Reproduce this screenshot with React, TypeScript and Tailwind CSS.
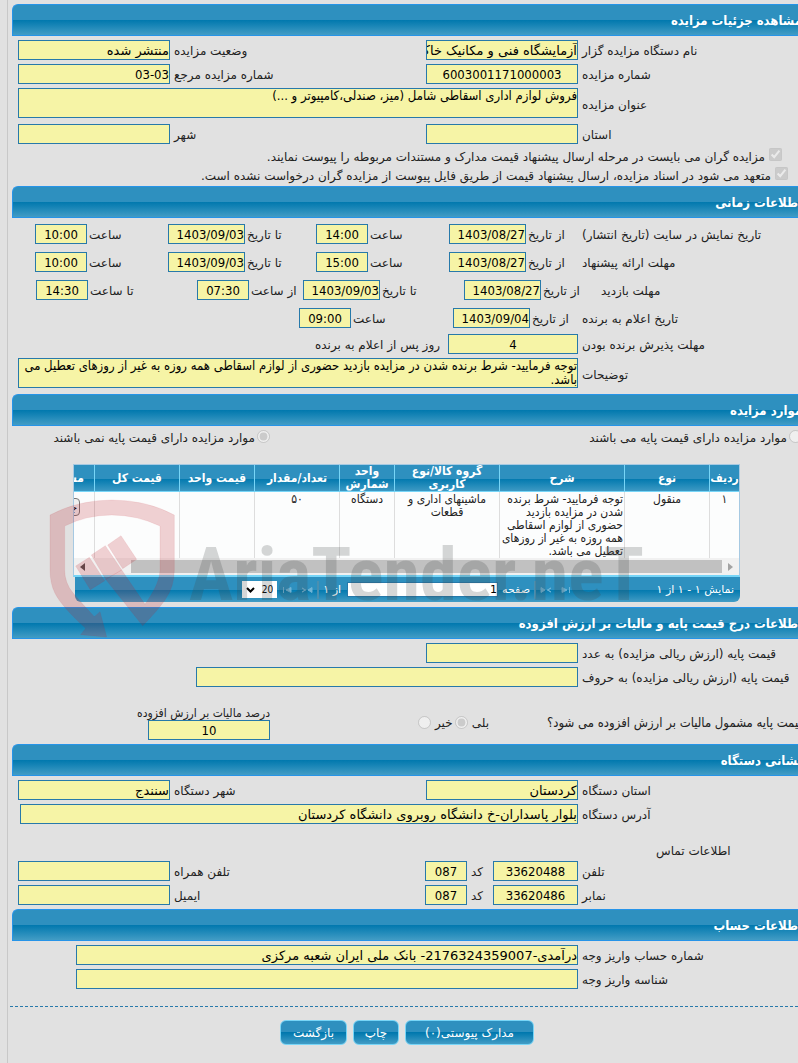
import { useId } from 'react';
import clsx from 'clsx';

const gloss = 'bg-[linear-gradient(to_bottom,#2e90bf_0%,#2e90bf_50%,#0078ae_50%,#429cc5_100%)]';
const fieldBase = 'block border border-[#2779aa] bg-[#f6f4a6] text-[13px] leading-[18px] text-black outline-none';
const condensed = "font-['DejaVu_Sans_Condensed','DejaVu_Sans',sans-serif]";

interface SectionProps {
  title: string;
  children: React.ReactNode;
}

function Section({ title, children }: SectionProps) {
  return (
    <section>
      <h2
        className={clsx(
          gloss,
          condensed,
          'flex h-8 items-center overflow-hidden rounded-tl-md border border-r-0 border-[#2694e8]'
        )}
      >
        <span className="-mr-1 whitespace-nowrap pt-0.5 text-[13px] font-bold text-white">{title}</span>
      </h2>
      {children}
    </section>
  );
}

interface FieldProps {
  label: string;
  value?: string;
  labelClass?: string;
  inputClass?: string;
}

function Field({ label, value = '', labelClass = 'w-[216px]', inputClass = 'w-[152px]' }: FieldProps) {
  const id = useId();
  const isNumber = /^[\d-]+$/.test(value);
  return (
    <>
      <label htmlFor={id} className={clsx('shrink-0 whitespace-nowrap pt-0.5 text-left', labelClass)}>
        {label}
      </label>
      <input
        id={id}
        readOnly
        value={value}
        className={clsx(fieldBase, 'h-5 shrink-0', isNumber && condensed, inputClass)}
      />
    </>
  );
}

function AreaField({ label, value }: { label: string; value: string }) {
  const id = useId();
  return (
    <div className="flex items-center gap-1">
      <label htmlFor={id} className="w-[216px] shrink-0 pt-1 text-left">
        {label}
      </label>
      <textarea
        id={id}
        readOnly
        value={value}
        className={clsx(
          condensed,
          'ml-1.5 block h-[30px] flex-1 resize-none overflow-hidden border border-[#2779aa] bg-[#f6f4a6] text-[13px] leading-[14px] text-black outline-none'
        )}
      />
    </div>
  );
}

function TimeField({ label, value, className }: { label: string; value: string; className: string }) {
  const id = useId();
  const isDate = value.includes('/');
  return (
    <div className={clsx('flex shrink-0 items-center justify-end gap-0.5', className)}>
      <label htmlFor={id} className="whitespace-nowrap pt-0.5">
        {label}
      </label>
      <input
        id={id}
        readOnly
        value={value}
        className={clsx(fieldBase, condensed, 'h-5', isDate ? 'w-[77px]' : 'w-[52px] text-center')}
      />
    </div>
  );
}

const timeRows = [
  {
    label: 'تاریخ نمایش در سایت (تاریخ انتشار)',
    labelClass: 'w-[216px]',
    items: [
      { label: 'از تاریخ', value: '1403/08/27', className: 'w-[133px]' },
      { label: 'ساعت', value: '14:00', className: 'w-[133px]' },
      { label: 'تا تاریخ', value: '1403/09/03', className: 'w-[148px]' },
      { label: 'ساعت', value: '10:00', className: 'w-[133px]' },
    ],
  },
  {
    label: 'مهلت ارائه پیشنهاد',
    labelClass: 'w-[216px]',
    items: [
      { label: 'از تاریخ', value: '1403/08/27', className: 'w-[133px]' },
      { label: 'ساعت', value: '15:00', className: 'w-[133px]' },
      { label: 'تا تاریخ', value: '1403/09/03', className: 'w-[148px]' },
      { label: 'ساعت', value: '10:00', className: 'w-[133px]' },
    ],
  },
  {
    label: 'مهلت بازدید',
    labelClass: 'w-[197px]',
    items: [
      { label: 'از تاریخ', value: '1403/08/27', className: 'w-[137px]' },
      { label: 'تا تاریخ', value: '1403/09/03', className: 'w-[161px]' },
      { label: 'از ساعت', value: '07:30', className: 'w-[106px]' },
      { label: 'تا ساعت', value: '14:30', className: 'w-[161px]' },
    ],
  },
  {
    label: 'تاریخ اعلام به برنده',
    labelClass: 'w-[216px]',
    items: [
      { label: 'از تاریخ', value: '1403/09/04', className: 'w-[129px]' },
      { label: 'ساعت', value: '09:00', className: 'w-[154px]' },
    ],
  },
];

const columns = [
  { title: 'ردیف', width: 'w-[30px]' },
  { title: 'نوع', width: 'w-[85px]' },
  { title: 'شرح', width: 'w-[125px]' },
  { title: 'گروه کالا/نوع کاربری', width: 'w-[105px]' },
  { title: 'واحد شمارش', width: 'w-[55px]' },
  { title: 'تعداد/مقدار', width: 'w-[85px]' },
  { title: 'قیمت واحد', width: 'w-[75px]' },
  { title: 'قیمت کل', width: 'w-[85px]' },
];

const cells = [
  '۱',
  'منقول',
  'توجه فرمایید- شرط برنده شدن در مزایده بازدید حضوری از لوازم اسقاطی همه روزه به غیر از روزهای تعطیل می باشد.',
  'ماشینهای اداری و قطعات',
  'دستگاه',
  '۵۰',
  '',
  '',
];

function PagerIcon({ d, label }: { d: string; label: string }) {
  return (
    <button type="button" disabled aria-label={label} className="text-[#6fb4d6]">
      <svg width="12" height="8" viewBox="0 0 12 8" fill="currentColor" stroke="currentColor">
        <path d={d} />
      </svg>
    </button>
  );
}

function ItemsTable() {
  return (
    <div className="mr-[58px] ml-[61px]">
      <div className="overflow-hidden border border-[#a6c9e2] border-b-2 border-b-[#77d5f7]">
        <table className="w-[720px] table-fixed border-separate border-spacing-0 text-[12px] leading-[13px]">
          <thead>
            <tr className={clsx(gloss, 'h-[27px] text-white')}>
              {columns.map((col) => (
                <th
                  key={col.title}
                  scope="col"
                  className={clsx(col.width, condensed, 'border-b border-l border-[#77d5f7] p-0 font-bold')}
                >
                  {col.title}
                </th>
              ))}
              <th scope="col" className={clsx(condensed, 'border-b border-[#77d5f7] p-0 pr-2.5 text-right font-bold')}>
                مستندات
              </th>
            </tr>
          </thead>
          <tbody>
            <tr className={clsx(condensed, 'h-[66px] bg-[#fcfdfd] align-top text-[#222222]')}>
              {cells.map((cell, i) => (
                <td
                  key={i}
                  className={clsx('border-l border-[#dddddd] px-px pt-px pb-0', i === 2 ? 'text-right' : 'text-center')}
                >
                  {cell}
                </td>
              ))}
              <td className="p-0 pt-1.5">
                <button
                  type="button"
                  className="mr-3.5 h-[18px] w-11 rounded-sm border border-[#767676] bg-[#efefef] pr-0.5 text-right text-[11px] text-black"
                >
                  جزئیات
                </button>
              </td>
            </tr>
          </tbody>
        </table>
        <div className="flex h-[17px] items-center justify-between bg-[#f1f1f1] px-1.5">
          <svg width="5" height="8" viewBox="0 0 5 8" fill="#a3a3a3">
            <path d="M0 0L5 4L0 8Z" />
          </svg>
          <div className="mr-1.5 ml-[46px] h-[13px] flex-1 bg-[#c1c1c1]" />
          <svg width="5" height="8" viewBox="0 0 5 8" fill="#505050">
            <path d="M5 0L0 4L5 8Z" />
          </svg>
        </div>
      </div>
      <div className={clsx(gloss, 'ml-0.5 flex h-[25px] items-center rounded-b-md text-[11px] text-white')}>
        <span className="w-[168px] shrink-0 pr-1.5">نمایش ۱ - ۱ از ۱</span>
        <PagerIcon label="صفحه اول" d="M2 1.5L7 4L2 6.5ZM9.500 1V7" />
        <span className="w-2" />
        <PagerIcon label="صفحه قبل" d="M1 1.500L5 4L1 6.500ZM11 2L7.500 4L11 6L7.500 4Z" />
        <span className="mx-1 h-[18px] w-0.5 bg-[#4a8fb0]" />
        <label className="flex items-center gap-1">
          صفحه
          <input readOnly value="1" className="h-[15px] w-[151px] border border-[#2779aa] bg-white text-[11px] text-black" />
        </label>
        <span className="mr-1.5">از ۱</span>
        <span className="mx-1 h-[18px] w-0.5 bg-[#4a8fb0]" />
        <PagerIcon label="صفحه بعد" d="M11 1.500L7 4L11 6.500ZM1 2L4.500 4L1 6L4.500 4Z" />
        <span className="w-2" />
        <PagerIcon label="صفحه آخر" d="M10 1.500L5 4L10 6.500ZM2.500 1V7" />
        <div className="relative mr-1">
          <select
            aria-label="تعداد در صفحه"
            defaultValue="20"
            className={clsx(condensed, 'block h-[17px] w-[35px] appearance-none bg-white px-1 text-[10px] text-black')}
          >
            <option>20</option>
          </select>
          <svg className="pointer-events-none absolute top-1.5 left-1" width="9" height="6" viewBox="0 0 9 6" fill="none">
            <path d="M1 1L4.500 4.500L8 1" stroke="#000" strokeWidth="2" />
          </svg>
        </div>
      </div>
    </div>
  );
}

function Watermark() {
  return (
    <div dir="ltr" aria-hidden="true" className="pointer-events-none absolute top-24 left-[33px] flex">
      <svg width="130" height="150" viewBox="0 0 390 450" className="shrink-0">
        <g fill="#be1e28" fillOpacity="0.2" stroke="#be1e28" strokeOpacity="0.08" strokeWidth="3">
          <path d="M15 75Q100 30 200 30Q305 30 388 75V240Q388 290 360 330Q335 365 293 407L182 268L230 240L300 343Q345 280 345 240V108Q275 75 200 75Q125 75 59 108V240Q59 280 85 310Q110 340 148 380L165 365L185 441L107 434L122 415Q50 350 30 310Q15 280 15 240Z" />
          <path d="M92 228L133 202L179 272L136 299Z" />
          <path d="M139 195L181 167L230 240L182 268Z" />
          <path d="M188 165L228 137L275 208L233 236Z" />
        </g>
      </svg>
      <span className="mt-10 ml-3.5 font-['Roboto_Condensed','Liberation_Sans_Narrow','Roboto',sans-serif] text-[74px] leading-[90px] font-bold whitespace-nowrap text-[#464b4b]/22">
        AriaTender.neT
      </span>
    </div>
  );
}

function ActionButton({ children, className }: { children: React.ReactNode; className: string }) {
  return (
    <button
      type="button"
      className={clsx(gloss, 'h-[25px] rounded-md border border-[#77d5f7] text-[12px] text-white', className)}
    >
      {children}
    </button>
  );
}

export default function App() {
  return (
    <div dir="rtl" className="min-h-screen overflow-hidden bg-[#e1e1e1] pl-[7px] font-['DejaVu_Sans',sans-serif]">
      <main className="min-h-screen border-l border-[#c8c8c8] pt-1 pl-1 text-[12px] leading-4 text-[#222222]">
        <Section title="مشاهده جزئیات مزایده">
          <div className="flex flex-col gap-1 py-1">
            <div className="flex items-center gap-1">
              <Field label="نام دستگاه مزایده گزار" value="آزمایشگاه فنی و مکانیک خاک" />
              <Field label="وضعیت مزایده" value="منتشر شده" labelClass="flex-1" inputClass="w-[152px] ml-1.5" />
            </div>
            <div className="flex items-center gap-1">
              <Field label="شماره مزایده" value="6003001171000003" inputClass="w-[152px] text-center" />
              <Field label="شماره مزایده مرجع" value="03-03" labelClass="flex-1" inputClass="w-[152px] ml-1.5" />
            </div>
            <AreaField label="عنوان مزایده" value="فروش لوازم اداری اسقاطی شامل (میز، صندلی،کامپیوتر و ...)" />
            <div className="mt-0.5 flex items-center gap-1">
              <Field label="استان" />
              <Field label="شهر" labelClass="flex-1" inputClass="w-[152px] ml-1.5" />
            </div>
          </div>
          <div className="flex flex-col gap-0.5 pb-0.5">
            <label className="mr-4 flex items-start gap-1">
              <input type="checkbox" defaultChecked disabled className="size-[13px]" />
              <span className="pt-px">
                مزایده گران می بایست در مرحله ارسال پیشنهاد قیمت مدارک و مستندات مربوطه را پیوست نمایند.
              </span>
            </label>
            <label className="mr-2.5 flex items-start gap-1">
              <input type="checkbox" defaultChecked disabled className="size-[13px]" />
              <span className="pt-px">
                متعهد می شود در اسناد مزایده، ارسال پیشنهاد قیمت از طریق فایل پیوست از مزایده گران درخواست نشده است.
              </span>
            </label>
          </div>
        </Section>

        <Section title="اطلاعات زمانی">
          <div className="flex flex-col gap-2 pt-1.5">
            {timeRows.map((row) => (
              <div key={row.label} className="flex items-center">
                <span className={clsx('shrink-0 pt-0.5 text-left', row.labelClass)}>{row.label}</span>
                {row.items.map((item) => (
                  <TimeField key={item.label + item.value} {...item} />
                ))}
              </div>
            ))}
          </div>
          <div className="flex flex-col gap-1 py-1.5">
            <div className="flex items-center gap-1">
              <Field label="مهلت پذیرش برنده بودن" value="4" inputClass="w-[130px] text-center" />
              <span className="mr-1 pt-0.5">روز پس از اعلام به برنده</span>
            </div>
            <AreaField
              label="توضیحات"
              value="توجه فرمایید- شرط برنده شدن در مزایده بازدید حضوری از لوازم اسقاطی همه روزه به غیر از روزهای تعطیل می باشد."
            />
          </div>
        </Section>

        <div className="relative">
          <Section title="موارد مزایده">
            <div className="flex h-[38px] pt-1">
              <label className="-mr-1 flex flex-1 items-start gap-0.5">
                <input type="radio" name="basePrice" disabled className="size-[13px]" />
                <span>موارد مزایده دارای قیمت پایه می باشند</span>
              </label>
              <label className="flex w-[258px] items-start gap-0.5">
                <input type="radio" name="basePrice" defaultChecked disabled className="size-[13px]" />
                <span>موارد مزایده دارای قیمت پایه نمی باشند</span>
              </label>
            </div>
            <ItemsTable />
          </Section>
          <div className="h-[5px]" />
          <Watermark />
        </div>

        <Section title="اطلاعات درج قیمت پایه و مالیات بر ارزش افزوده">
          <div className="flex flex-col gap-1 pt-1">
            <div className="flex items-center gap-1">
              <Field label="قیمت پایه (ارزش ریالی مزایده) به عدد" />
            </div>
            <div className="flex items-center gap-1">
              <Field label="قیمت پایه (ارزش ریالی مزایده) به حروف" inputClass="w-[382px]" />
            </div>
          </div>
          <div className="mt-5 flex items-start pb-1">
            <span className={clsx(condensed, 'mt-2 flex w-[251px] shrink-0 justify-end text-[13px] whitespace-nowrap')}>
              قیمت پایه مشمول مالیات بر ارزش افزوده می شود؟
            </span>
            <fieldset className="mt-2 mr-[58px] flex flex-1 gap-0.5">
              <label className="flex gap-1">
                بلی
                <input type="radio" name="vat" defaultChecked disabled className="mt-px size-[13px]" />
              </label>
              <label className="flex gap-1">
                خیر
                <input type="radio" name="vat" disabled className="mt-px size-[13px]" />
              </label>
            </fieldset>
            <label className="flex w-[258px] flex-col">
              <span className={clsx(condensed, 'h-[13px] leading-[13px]')}>درصد مالیات بر ارزش افزوده</span>
              <input readOnly value="10" className={clsx(fieldBase, condensed, 'h-5 w-[122px] text-center')} />
            </label>
          </div>
        </Section>

        <Section title="نشانی دستگاه">
          <div className="flex flex-col gap-1 py-1">
            <div className="flex items-center gap-1">
              <Field label="استان دستگاه" value="کردستان" />
              <Field label="شهر دستگاه" value="سنندج" labelClass="flex-1" inputClass="w-[152px] ml-1.5" />
            </div>
            <div className="flex items-center gap-1">
              <Field
                label="آدرس دستگاه"
                value="بلوار پاسداران-خ دانشگاه روبروی دانشگاه کردستان"
                inputClass="flex-1 ml-2"
              />
            </div>
            <h3 className="mt-[15px] w-[142px] text-left">اطلاعات تماس</h3>
            <div className="-mt-0.5 flex items-center gap-1">
              <Field label="تلفن" value="33620488" inputClass="w-[85px] text-center" />
              <Field label="کد" value="087" labelClass="mr-1.5" inputClass="w-[42px] text-center" />
              <Field label="تلفن همراه" labelClass="flex-1" inputClass="w-[152px] ml-1.5" />
            </div>
            <div className="flex items-center gap-1">
              <Field label="نمابر" value="33620486" inputClass="w-[85px] text-center" />
              <Field label="کد" value="087" labelClass="mr-1.5" inputClass="w-[42px] text-center" />
              <Field label="ایمیل" labelClass="flex-1" inputClass="w-[152px] ml-1.5" />
            </div>
          </div>
        </Section>

        <Section title="اطلاعات حساب">
          <div className="flex flex-col gap-1 py-1">
            <div className="flex items-center gap-1">
              <Field
                label="شماره حساب واریز وجه"
                value="درآمدی-2176324359007- بانک ملی ایران شعبه مرکزی"
                inputClass="flex-1 ml-16"
              />
            </div>
            <div className="flex items-center gap-1">
              <Field label="شناسه واریز وجه" inputClass="flex-1 ml-16" />
            </div>
          </div>
        </Section>

        <div className="mt-[13px] -ml-0.5 border-t border-dashed border-[#2779aa]" />
        <div className="mt-[13px] flex justify-center gap-1.5 pl-1">
          <ActionButton className="w-[129px]">مدارک پیوستی(۰)</ActionButton>
          <ActionButton className="w-[46px]">چاپ</ActionButton>
          <ActionButton className="w-[67px]">بازگشت</ActionButton>
        </div>
      </main>
    </div>
  );
}
